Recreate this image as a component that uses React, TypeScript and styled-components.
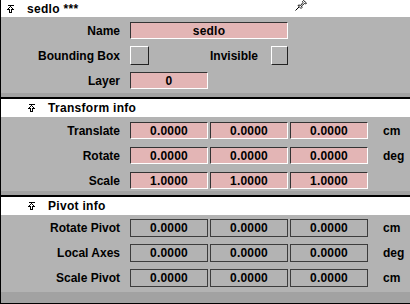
import React from "react";
import styled, { createGlobalStyle } from "styled-components";

const Global = createGlobalStyle`
  html, body { margin: 0; padding: 0; background: #b3b3b3; }
  body { font-family: "Liberation Sans", Arial, sans-serif; font-weight: bold; font-size: 12px; color: #000; }
`;

const Page = styled.div`
  width: 410px;
  height: 304px;
  display: flex;
  flex-direction: column;
  border-left: 1px solid #000;
  box-sizing: border-box;
  overflow: hidden;
  background: #b3b3b3;
`;

const Section = styled.section<{ $fill?: boolean }>`
  display: flex;
  flex-direction: column;
  flex: ${(p) => (p.$fill ? "1" : "none")};
  border-bottom: 2px solid #000;
`;

const Header = styled.div<{ $indent: number; $h: number }>`
  height: ${(p) => p.$h}px;
  background: #fff;
  display: flex;
  align-items: center;
  padding-left: ${(p) => p.$indent}px;
  gap: 13px;
  position: relative;
  letter-spacing: 0.3px;
`;

const Title = styled.span`
  line-height: 1;
`;

const PinWrap = styled.span`
  position: absolute;
  left: 294px;
  top: 0px;
  display: flex;
`;

const Body = styled.div<{ $pt: number; $pb: number; $gap: number; $fill?: boolean }>`
  display: grid;
  grid-template-columns: 127px 78px 78px 78px 1fr;
  column-gap: 2px;
  row-gap: ${(p) => p.$gap}px;
  padding: ${(p) => p.$pt}px 0 ${(p) => p.$pb}px 0;
  align-content: start;
  flex: ${(p) => (p.$fill ? "1" : "none")};
`;

const Strip = styled.div<{ $h: number }>`
  height: ${(p) => p.$h}px;
  background: #a2a2a2;
`;

const Label = styled.div`
  grid-column: 1;
  text-align: right;
  padding-right: 8px;
  display: flex;
  align-items: center;
  justify-content: flex-end;
`;

const Field = styled.div<{ $span?: number; $tone: "pink" | "gray"; $h: number }>`
  grid-column: span ${(p) => p.$span ?? 1};
  height: ${(p) => p.$h}px;
  box-sizing: border-box;
  display: flex;
  align-items: center;
  justify-content: center;
  letter-spacing: 0.2px;
  background: ${(p) => (p.$tone === "pink" ? "#e3b5b5" : "#b3b3b3")};
  border-style: solid;
  border-width: 1px;
  border-color: ${(p) =>
    p.$tone === "pink" ? "#333 #fff #fff #333" : "#3c3c3c #3c3c3c #3c3c3c #3c3c3c"};
`;

const Unit = styled.div`
  display: flex;
  align-items: center;
  padding-left: 13px;
`;

const Check = styled.div`
  width: 19px;
  height: 19px;
  box-sizing: border-box;
  border-style: solid;
  border-width: 1px;
  border-color: #fff #222 #222 #fff;
  background: #b3b3b3;
`;

const CheckCell = styled.div<{ $justify: string }>`
  display: flex;
  align-items: center;
  justify-content: ${(p) => p.$justify};
  gap: 13px;
  margin: -1px 0;
`;

const Arrow = () => (
  <svg width="7" height="8" viewBox="0 0 7 8" shapeRendering="crispEdges">
    <path d="M0.5 0.5H6.5" stroke="#000" strokeWidth="1" fill="none" />
    <path
      d="M3.5 1.5L6.5 4.5H4.5V7.5H2.5V4.5H0.5Z"
      stroke="#000"
      strokeWidth="1"
      fill="none"
    />
  </svg>
);

const Pin = () => (
  <svg width="13" height="11" viewBox="0 0 13 11">
    <path d="M0.5 10.5L4 7" stroke="#000" strokeWidth="1" fill="none" />
    <path
      d="M3 5.5L6 8.5L7 7.5L6.5 6L9.5 3.5L10.5 4L11.5 3L8.5 0.5L7.5 1.5L8 2.5L5.5 5.5L4 5Z"
      stroke="#000"
      strokeWidth="0.9"
      fill="#fff"
      strokeLinejoin="round"
    />
  </svg>
);

type Row = { label: string; values: string[]; unit: string };

const transform: Row[] = [
  { label: "Translate", values: ["0.0000", "0.0000", "0.0000"], unit: "cm" },
  { label: "Rotate", values: ["0.0000", "0.0000", "0.0000"], unit: "deg" },
  { label: "Scale", values: ["1.0000", "1.0000", "1.0000"], unit: "" },
];

const pivot: Row[] = [
  { label: "Rotate Pivot", values: ["0.0000", "0.0000", "0.0000"], unit: "cm" },
  { label: "Local Axes", values: ["0.0000", "0.0000", "0.0000"], unit: "deg" },
  { label: "Scale Pivot", values: ["0.0000", "0.0000", "0.0000"], unit: "cm" },
];

export default function App() {
  return (
    <>
      <Global />
      <Page>
        <Section>
          <Header $indent={6} $h={17}>
            <Arrow />
            <Title>sedlo ***</Title>
            <PinWrap>
              <Pin />
            </PinWrap>
          </Header>
          <Body $pt={5} $pb={4} $gap={8}>
            <Label>Name</Label>
            <Field $span={2} $tone="pink" $h={17}>sedlo</Field>
            <div />
            <div />
            <Label>Bounding Box</Label>
            <CheckCell $justify="flex-start">
              <Check />
            </CheckCell>
            <CheckCell $justify="flex-end">
              <span>Invisible</span>
              <Check />
            </CheckCell>
            <div />
            <div />
            <Label>Layer</Label>
            <Field $tone="pink" $h={17}>0</Field>
            <div />
            <div />
            <div />
          </Body>
          <Strip $h={4} />
        </Section>
        <Section>
          <Header $indent={27} $h={18}>
            <Arrow />
            <Title>Transform info</Title>
          </Header>
          <Body $pt={5} $pb={2} $gap={8}>
            {transform.map((r) => (
              <React.Fragment key={r.label}>
                <Label>{r.label}</Label>
                {r.values.map((v, i) => (
                  <Field key={i} $tone="pink" $h={17}>{v}</Field>
                ))}
                <Unit>{r.unit}</Unit>
              </React.Fragment>
            ))}
          </Body>
          <Strip $h={4} />
        </Section>
        <Section $fill>
          <Header $indent={27} $h={18}>
            <Arrow />
            <Title>Pivot info</Title>
          </Header>
          <Body $pt={4} $pb={5} $gap={7}>
            {pivot.map((r) => (
              <React.Fragment key={r.label}>
                <Label>{r.label}</Label>
                {r.values.map((v, i) => (
                  <Field key={i} $tone="gray" $h={18}>{v}</Field>
                ))}
                <Unit>{r.unit}</Unit>
              </React.Fragment>
            ))}
          </Body>
          <Strip $h={11} />
        </Section>
      </Page>
    </>
  );
}
